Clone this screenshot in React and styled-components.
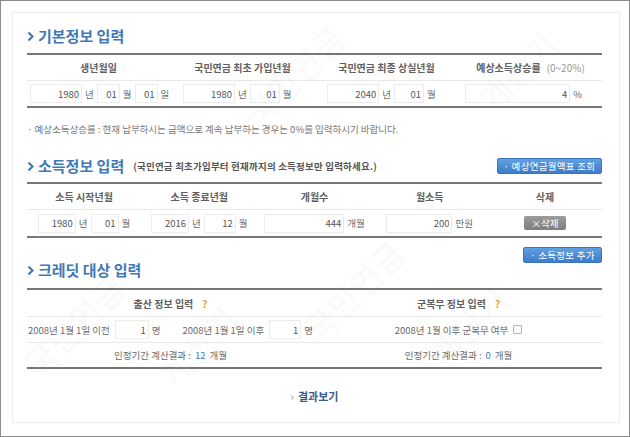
import React from "react";
import styled, { createGlobalStyle } from "styled-components";

const GlobalStyle = createGlobalStyle`
  html, body {
    margin: 0;
    padding: 0;
    background: #fff;
  }
  body {
    font-family: "Noto Sans CJK KR", "Liberation Sans", sans-serif;
  }
  * {
    box-sizing: border-box;
  }
`;

const Frame = styled.div`
  position: relative;
  width: 630px;
  height: 437px;
  border: 1px solid #8c8c8c;
  padding: 11px 9px 0 11px;
  overflow: hidden;
  background: #fff;
`;

const Panel = styled.div`
  height: 411px;
  border: 1px solid #ececec;
  padding: 13px 17px 0 14px;
`;

const Title = styled.div`
  display: flex;
  align-items: center;
  justify-content: space-between;
  height: 20px;
  margin-top: ${(p) => p.$top || 0}px;
  margin-bottom: ${(p) => p.$bottom || 0}px;
`;

const TitleText = styled.h2`
  display: flex;
  align-items: center;
  gap: 4px;
  margin: 0;
  font-size: 15px;
  line-height: 20px;
  font-weight: 700;
  color: #3f78b8;
  white-space: nowrap;

  small {
    margin-left: 5px;
    font-size: 9.5px;
    font-weight: 700;
    color: #555;
    letter-spacing: 0.2px;
  }
`;

const Chevron = () => (
  <svg width="7" height="11" viewBox="0 0 7 11">
    <polyline
      points="1.5,1.5 5.5,5.5 1.5,9.5"
      fill="none"
      stroke="#3f78b8"
      strokeWidth="2.2"
    />
  </svg>
);

const BlueButton = styled.button`
  width: ${(p) => p.$w}px;
  height: 16px;
  padding: 0;
  border: 1px solid #3a74bd;
  border-radius: 2px;
  background: linear-gradient(#61a0e2, #3d7cc8);
  color: #fff;
  font-family: inherit;
  font-size: 9.5px;
  line-height: 14px;
  letter-spacing: 0.3px;
  text-align: center;
  cursor: pointer;
`;

const ButtonRow = styled.div`
  display: flex;
  justify-content: flex-end;
  margin-top: 9px;
`;

const Table = styled.div`
  border-top: 2px solid #777;
  border-bottom: 2px solid #777;
`;

const Row = styled.div`
  display: flex;
  height: ${(p) => p.$h}px;
  & + & {
    border-top: 1px solid #e8e8e8;
  }
`;

const Cell = styled.div`
  flex: 1;
  display: flex;
  align-items: center;
  justify-content: ${(p) => p.$justify || "center"};
  gap: 3px;
  padding: ${(p) => p.$pad || "0"};
  font-size: ${(p) => (p.$head ? "10px" : "9.5px")};
  font-weight: ${(p) => (p.$head ? 700 : 400)};
  color: ${(p) => (p.$head ? "#606060" : "#6a6a6a")};
  white-space: nowrap;
  & + & {
    border-left: 1px solid ${(p) => (p.$plain ? "transparent" : "#f2f2f2")};
  }

  span.range {
    font-weight: 400;
    color: #999;
    margin-left: 3px;
  }
`;

const Field = styled.input`
  width: ${(p) => p.$w}px;
  height: 19px;
  margin-left: ${(p) => p.$ml || 0}px;
  padding: 0 2px;
  border: 1px solid #ececec;
  background: #fff;
  font-family: inherit;
  font-size: 9.5px;
  color: #555;
  text-align: right;
  outline: none;
`;

const DeleteButton = styled.button`
  width: 42px;
  height: 14px;
  padding: 0;
  border: none;
  border-radius: 2px;
  background: linear-gradient(#9c9c9c, #7e7e7e);
  color: #fff;
  font-family: inherit;
  font-size: 9.5px;
  line-height: 14px;
`;

const Note = styled.p`
  margin: 14px 0 20px;
  font-size: 9.5px;
  line-height: 14px;
  color: #777;
`;

const Help = styled.span`
  margin-left: 6px;
  color: #e4a23c;
  font-weight: 700;
`;

const Check = styled.span`
  display: inline-block;
  width: 9px;
  height: 9px;
  margin-left: 2px;
  border: 1px solid #b5b5b5;
  border-radius: 1px;
  background: #fafafa;
`;

const Blue = styled.span`
  color: #3f78b8;
  margin: 0 1px;
`;

const Gap = styled.span`
  width: 16px;
`;

const Result = styled.div`
  display: flex;
  justify-content: center;
  align-items: center;
  gap: 4px;
  margin-top: 17px;
  height: 20px;
  font-size: 11px;
  font-weight: 700;
  color: #3a5a8c;

  i {
    font-style: normal;
    font-weight: 400;
    color: #999;
  }
`;

const Watermark = styled.div`
  position: absolute;
  inset: 0;
  pointer-events: none;
`;

const Mark = styled.span`
  position: absolute;
  left: ${(p) => p.$x}px;
  top: ${(p) => p.$y}px;
  transform: rotate(-45deg);
  font-size: 34px;
  font-weight: 700;
  color: rgba(120, 120, 120, 0.035);
  white-space: nowrap;
`;

const marks = [
  { x: 230, y: 50, t: "국민연금" },
  { x: 470, y: 45, t: "계산기" },
  { x: 10, y: 300, t: "국민연금" },
  { x: 150, y: 320, t: "계산기" },
  { x: 290, y: 265, t: "국민연금" },
  { x: 420, y: 300, t: "계산기" },
];

const App = () => {
  return (
    <>
      <GlobalStyle />
      <Frame>
        <Panel>
          <Title $bottom={7}>
            <TitleText>
              <Chevron />
              기본정보 입력
            </TitleText>
          </Title>
          <Table>
            <Row $h={25}>
              <Cell $head>생년월일</Cell>
              <Cell $head>국민연금 최초 가입년월</Cell>
              <Cell $head>국민연금 최종 상실년월</Cell>
              <Cell $head>
                예상소득상승률<span className="range">(0~20%)</span>
              </Cell>
            </Row>
            <Row $h={26}>
              <Cell $justify="flex-start" $pad="0 0 0 3px">
                <Field $w={52} readOnly value="1980" /> 년
                <Field $w={23} readOnly value="01" /> 월
                <Field $w={23} readOnly value="01" /> 일
              </Cell>
              <Cell $justify="flex-end" $pad="0 22px 0 0">
                <Field $w={52} readOnly value="1980" /> 년
                <Field $w={30} readOnly value="01" /> 월
              </Cell>
              <Cell $justify="flex-end" $pad="0 24px 0 0">
                <Field $w={52} readOnly value="2040" /> 년
                <Field $w={30} readOnly value="01" /> 월
              </Cell>
              <Cell $justify="flex-end" $pad="0 20px 0 0">
                <Field $w={105} readOnly value="4" /> %
              </Cell>
            </Row>
          </Table>

          <Note>
            · 예상소득상승률 : 현재 납부하시는 금액으로 계속 납부하는 경우는 0%를 입력하시기 바랍니다.
          </Note>

          <Title $bottom={6}>
            <TitleText>
              <Chevron />
              소득정보 입력
              <small>(국민연금 최초가입부터 현재까지의 소득정보만 입력하세요.)</small>
            </TitleText>
            <BlueButton $w={105}>· 예상연금월액표 조회</BlueButton>
          </Title>
          <Table>
            <Row $h={25}>
              <Cell $head>소득 시작년월</Cell>
              <Cell $head>소득 종료년월</Cell>
              <Cell $head>개월수</Cell>
              <Cell $head>월소득</Cell>
              <Cell $head>삭제</Cell>
            </Row>
            <Row $h={27}>
              <Cell>
                <Field $w={38} readOnly value="1980" /> 년
                <Field $w={28} readOnly value="01" /> 월
              </Cell>
              <Cell>
                <Field $w={38} readOnly value="2016" /> 년
                <Field $w={32} readOnly value="12" /> 월
              </Cell>
              <Cell>
                <Field $w={80} readOnly value="444" /> 개월
              </Cell>
              <Cell>
                <Field $w={66} readOnly value="200" /> 만원
              </Cell>
              <Cell>
                <DeleteButton>×삭제</DeleteButton>
              </Cell>
            </Row>
          </Table>
          <ButtonRow>
            <BlueButton $w={79}>· 소득정보 추가</BlueButton>
          </ButtonRow>

          <Title $top={-3} $bottom={8}>
            <TitleText>
              <Chevron />
              크레딧 대상 입력
            </TitleText>
          </Title>
          <Table>
            <Row $h={26}>
              <Cell $head $plain>
                출산 정보 입력<Help>?</Help>
              </Cell>
              <Cell $head $plain>
                군복무 정보 입력<Help>?</Help>
              </Cell>
            </Row>
            <Row $h={26}>
              <Cell $plain>
                2008년 1월 1일 이전
                <Field $w={34} $ml={2} readOnly value="1" /> 명
                <Gap />
                2008년 1월 1일 이후
                <Field $w={32} $ml={2} readOnly value="1" /> 명
              </Cell>
              <Cell $plain>
                2008년 1월 이후 군복무 여부<Check />
              </Cell>
            </Row>
            <Row $h={25}>
              <Cell $plain>
                인정기간 계산결과 :<Blue>12</Blue>개월
              </Cell>
              <Cell $plain>
                인정기간 계산결과 :<Blue>0</Blue>개월
              </Cell>
            </Row>
          </Table>

          <Result>
            <i>›</i>결과보기
          </Result>
        </Panel>
        <Watermark>
          {marks.map((m, i) => (
            <Mark key={i} $x={m.x} $y={m.y}>
              {m.t}
            </Mark>
          ))}
        </Watermark>
      </Frame>
    </>
  );
};

export default App;
